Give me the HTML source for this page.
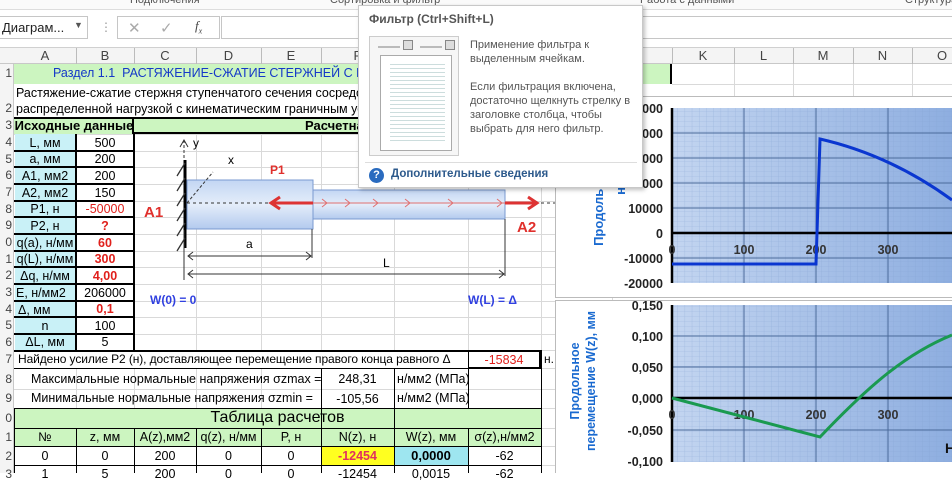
<!DOCTYPE html>
<html><head><meta charset="utf-8"><style>
*{margin:0;padding:0;box-sizing:border-box}
body{width:952px;height:473px;overflow:hidden;background:#fff;font-family:"Liberation Sans","DejaVu Sans",sans-serif;position:relative;font-size:12px;color:#000}
.a{position:absolute;white-space:nowrap}
.c{position:absolute;display:flex;align-items:center;justify-content:center;white-space:nowrap;font-size:12.5px}
.hd{position:absolute;top:48px;height:16px;font-size:13px;color:#444;text-align:center;line-height:16px}
.rn{position:absolute;left:0;width:12px;font-size:12px;color:#444;text-align:right}
.cy{background:#c9f1f7}
.gr{background:#ccf5c0}
.red{color:#e0201c}
</style></head><body>
<div class="a" style="left:0;top:0;width:952px;height:10px;background:#fafafa;border-bottom:1px solid #ddd"></div>
<div class="a" style="left:130px;top:-6px;font-size:11px;color:#555">Подключения</div>
<div class="a" style="left:330px;top:-6px;font-size:11px;color:#555">Сортировка и фильтр</div>
<div class="a" style="left:640px;top:-6px;font-size:11px;color:#555">Работа с данными</div>
<div class="a" style="left:905px;top:-6px;font-size:11px;color:#555">Структура</div>
<div class="a" style="left:0;top:10px;width:952px;height:38px;background:#fff;border-bottom:1px solid #d0d0d0"></div>
<div class="a" style="left:-1px;top:16px;width:89px;height:23px;border:1px solid #c6c6c6;font-size:13px;line-height:21px;padding-left:2px;color:#222">Диаграм...</div>
<div class="a" style="left:74px;top:20px;font-size:9px;color:#555">▼</div>
<div class="a" style="left:100px;top:20px;color:#999">⋮</div>
<div class="a" style="left:117px;top:16px;width:103px;height:23px;border:1px solid #c6c6c6"></div>
<div class="a" style="left:128px;top:19px;font-size:15px;color:#aaa">✕</div>
<div class="a" style="left:160px;top:19px;font-size:15px;color:#aaa">✓</div>
<div class="a" style="left:195px;top:18px;font-size:13px;color:#444;font-style:italic;font-family:'Liberation Serif',serif">f<sub style="font-size:8px">x</sub></div>
<div class="a" style="left:221px;top:16px;width:740px;height:23px;border:1px solid #c6c6c6"></div>
<div class="a" style="left:0;top:48px;width:952px;height:16px;background:#f4f4f4;border-bottom:1px solid #c8c8c8"></div>
<div class="a" style="left:0;top:64px;width:14px;height:409px;background:#f4f4f4;border-right:1px solid #c8c8c8"></div>
<div class="hd" style="left:14px;width:62px">A</div>
<div class="hd" style="left:76px;width:58px">B</div>
<div class="hd" style="left:134px;width:62px">C</div>
<div class="hd" style="left:196px;width:65px">D</div>
<div class="hd" style="left:261px;width:60px">E</div>
<div class="hd" style="left:321px;width:73px">F</div>
<div class="hd" style="left:672px;width:62px">K</div>
<div class="hd" style="left:734px;width:59px">L</div>
<div class="hd" style="left:793px;width:60px">M</div>
<div class="hd" style="left:853px;width:59px">N</div>
<div class="hd" style="left:912px;width:60px">O</div>
<svg class="a" style="left:0;top:0" width="952" height="473">
<g stroke="#d9d9d9" stroke-width="1">
<path d="M76.5 64V473M134.5 64V473M196.5 64V473M261.5 64V473M321.5 64V473M394.5 64V473M468.5 64V473M541.5 64V473M612.5 64V473M734.5 64V98M793.5 64V98M853.5 64V98M912.5 64V98"/>
<path d="M14 84.5H952M14 117.5H952M14 134.5H560M14 151.5H560M14 167.5H560M14 184.5H560M14 201.5H560M14 217.5H560M14 234.5H560M14 251.5H560M14 267.5H560M14 284.5H560M14 301.5H560M14 317.5H560M14 334.5H560M14 350.5H560M14 368.5H560M14 389.5H560M14 408.5H560M14 428.5H560M14 446.5H560M14 465.5H560"/>
</g>
<g stroke="#bbb"><path d="M76.5 48V64M134.5 48V64M196.5 48V64M261.5 48V64M321.5 48V64M734.5 48V64M793.5 48V64M853.5 48V64M912.5 48V64M672.5 48V64"/></g>
</svg>
<div class="rn" style="top:66px">1</div><div class="rn" style="top:101px">2</div><div class="rn" style="top:118px">3</div>
<div class="rn" style="top:135px">4</div><div class="rn" style="top:152px">5</div><div class="rn" style="top:168px">6</div>
<div class="rn" style="top:185px">7</div><div class="rn" style="top:202px">8</div><div class="rn" style="top:218px">9</div>
<div class="rn" style="top:235px">0</div><div class="rn" style="top:252px">1</div><div class="rn" style="top:268px">2</div>
<div class="rn" style="top:285px">3</div><div class="rn" style="top:302px">4</div><div class="rn" style="top:318px">5</div>
<div class="rn" style="top:335px">6</div><div class="rn" style="top:352px">7</div><div class="rn" style="top:372px">8</div>
<div class="rn" style="top:391px">9</div><div class="rn" style="top:411px">0</div><div class="rn" style="top:430px">1</div>
<div class="rn" style="top:449px">2</div><div class="rn" style="top:467px">3</div>
<div class="a gr" style="left:14px;top:64px;width:658px;height:20px;border-right:2px solid #000"></div>
<div class="a" style="left:53px;top:66px;font-size:12.5px;color:#1438c8">Раздел 1.1&nbsp; РАСТЯЖЕНИЕ-СЖАТИЕ СТЕРЖНЕЙ С ПРОМЕЖУТОЧНОЙ ОПОРОЙ</div>
<div class="a" style="left:670px;top:84px;width:2px;height:14px;background:#000"></div>
<div class="a" style="left:14px;top:84px;width:658px;height:33px;background:#fff"></div>
<div class="a" style="left:16px;top:85px;font-size:12.5px;line-height:16px">Растяжение-сжатие стержня ступенчатого сечения сосредоточенной силой и<br>распределенной нагрузкой с кинематическим граничным условием</div>
<div class="a gr" style="left:14px;top:117px;width:120px;height:17px;border-top:2px solid #000;border-right:2px solid #000"></div>
<div class="c" style="left:14px;top:117px;width:120px;height:17px;font-weight:bold;font-size:13px">Исходные данные</div>
<div class="a gr" style="left:134px;top:117px;width:430px;height:17px;border-top:2px solid #000;border-bottom:2px solid #000"></div>
<div class="a" style="left:305px;top:118px;font-weight:bold;font-size:13px">Расчетная схема</div>
<div class="a" style="left:14px;top:134px;width:121px;height:216px;border-right:2px solid #000"></div>
<div class="a cy" style="left:15px;top:134px;width:61px;height:216px"></div>
<div class="c" style="left:14px;top:134px;width:62px;height:17px">L, мм</div><div class="c" style="left:76px;top:134px;width:58px;height:17px">500</div>
<div class="c" style="left:14px;top:151px;width:62px;height:16px">a, мм</div><div class="c" style="left:76px;top:151px;width:58px;height:16px">200</div>
<div class="c" style="left:14px;top:167px;width:62px;height:17px">A1, мм2</div><div class="c" style="left:76px;top:167px;width:58px;height:17px">200</div>
<div class="c" style="left:14px;top:184px;width:62px;height:17px">A2, мм2</div><div class="c" style="left:76px;top:184px;width:58px;height:17px">150</div>
<div class="c" style="left:14px;top:201px;width:62px;height:16px">P1, н</div><div class="c red" style="left:76px;top:201px;width:58px;height:16px">-50000</div>
<div class="c" style="left:14px;top:217px;width:62px;height:17px">P2, н</div><div class="c red" style="left:76px;top:217px;width:58px;height:17px;font-weight:bold">?</div>
<div class="c" style="left:14px;top:234px;width:62px;height:17px">q(a), н/мм</div><div class="c red" style="left:76px;top:234px;width:58px;height:17px;font-weight:bold">60</div>
<div class="c" style="left:14px;top:251px;width:62px;height:16px">q(L), н/мм</div><div class="c red" style="left:76px;top:251px;width:58px;height:16px;font-weight:bold">300</div>
<div class="c" style="left:14px;top:267px;width:62px;height:17px">Δq, н/мм</div><div class="c red" style="left:76px;top:267px;width:58px;height:17px;font-weight:bold">4,00</div>
<div class="a" style="left:16px;top:286px;font-size:12.5px">E, н/мм2</div><div class="c" style="left:76px;top:284px;width:58px;height:17px">206000</div>
<div class="a" style="left:18px;top:303px;font-size:12.5px">Δ, мм</div><div class="c red" style="left:76px;top:301px;width:58px;height:16px;font-weight:bold">0,1</div>
<div class="c" style="left:14px;top:317px;width:62px;height:17px">n</div><div class="c" style="left:76px;top:317px;width:58px;height:17px">100</div>
<div class="c" style="left:14px;top:334px;width:62px;height:16px">ΔL, мм</div><div class="c" style="left:76px;top:334px;width:58px;height:16px">5</div>
<svg class="a" style="left:0;top:0" width="952" height="473"><g stroke="#000" stroke-width="2"><path d="M76 134V350M14 151H134M14 167H134M14 184H134M14 201H134M14 217H134M14 234H134M14 251H134M14 267H134M14 284H134M14 301H134M14 317H134M14 334H134"/></g></svg>
<svg class="a" style="left:0;top:0" width="600" height="350">
<defs><linearGradient id="bar" x1="0" y1="0" x2="0" y2="1"><stop offset="0" stop-color="#c3d6f3"/><stop offset="0.5" stop-color="#e4edfa"/><stop offset="1" stop-color="#b3caee"/></linearGradient></defs>
<rect x="187" y="180" width="126" height="49" fill="url(#bar)" stroke="#7a9ad0"/>
<rect x="313" y="190" width="192" height="29" fill="url(#bar)" stroke="#7a9ad0"/>
<path d="M185 160V248" stroke="#000" stroke-width="3"/>
<g stroke="#333" stroke-width="1.3"><path d="M185 163l-8 13M185 178l-8 13M185 193l-8 13M185 208l-8 13M185 223l-8 13M185 238l-8 13"/></g>
<path d="M184 158V140" stroke="#333" stroke-dasharray="3 2"/><path d="M180 147l4-7 4 7" fill="none" stroke="#333"/>
<path d="M187 203L213 172" stroke="#333" stroke-dasharray="3 2"/>
<path d="M187 203H560" stroke="#333" stroke-dasharray="3 3"/>
<path d="M272 203H313" stroke="#d33" stroke-width="3"/><path d="M280 197l-9 6 9 6" fill="none" stroke="#d33" stroke-width="3"/>
<g stroke="#e07070" fill="none"><path d="M313 203H505"/><path d="M322 199l5 4-5 4M345 199l5 4-5 4M373 199l5 4-5 4M405 199l5 4-5 4M448 199l5 4-5 4M497 199l5 4-5 4"/></g>
<path d="M505 203H535" stroke="#d33" stroke-width="3"/><path d="M528 197l9 6-9 6" fill="none" stroke="#d33" stroke-width="3"/>
<g stroke="#333" fill="none"><path d="M184 230V280M312 229V258M505 219V276"/><path d="M188 256H311M188 274H504"/><path d="M193 252l-5 4 5 4M306 252l5 4-5 4M193 270l-5 4 5 4M499 270l5 4-5 4"/></g>
<text x="193" y="147" font-size="12">y</text><text x="228" y="164" font-size="12">x</text>
<text x="270" y="174" font-size="12" fill="#e0302c" font-weight="bold">P1</text>
<text x="144" y="217" font-size="15" fill="#e0302c" font-weight="bold">A1</text>
<text x="517" y="232" font-size="15" fill="#e0302c" font-weight="bold">A2</text>
<text x="246" y="248" font-size="12">a</text><text x="383" y="267" font-size="12">L</text>
<text x="150" y="304" font-size="12" fill="#3040e0" font-weight="bold">W(0) = 0</text>
<text x="468" y="304" font-size="12" fill="#3040e0" font-weight="bold">W(L) = Δ</text>
</svg>
<div class="a" style="left:14px;top:350px;width:527px;height:2px;background:#000"></div>
<div class="a" style="left:15px;top:352px;width:453px;height:16px;background:#fff"></div>
<div class="a" style="left:18px;top:352px;font-size:12px;letter-spacing:-0.1px">Найдено усилие P2 (н), доставляющее перемещение правого конца равного Δ</div>
<div class="c red" style="left:468px;top:351px;width:73px;height:17px;border:1px solid #000;border-right:2px solid #000;background:#fff">-15834</div>
<div class="a" style="left:544px;top:352px">н.</div>
<div class="a" style="left:31px;top:372px;font-size:12.5px">Максимальные нормальные напряжения σzmax =</div>
<div class="c" style="left:321px;top:368px;width:73px;height:21px">248,31</div>
<div class="a" style="left:397px;top:372px;font-size:12.5px">н/мм2 (МПа)</div>
<div class="a" style="left:31px;top:391px;font-size:12.5px">Минимальные нормальные напряжения σzmin =</div>
<div class="c" style="left:321px;top:389px;width:73px;height:19px">-105,56</div>
<div class="a" style="left:397px;top:391px;font-size:12.5px">н/мм2 (МПа)</div>
<div class="a gr" style="left:14px;top:408px;width:527px;height:38px"></div>
<div class="c" style="left:14px;top:408px;width:527px;height:20px;font-size:16px">Таблица расчетов</div>
<div class="c" style="left:14px;top:428px;width:62px;height:18px">№</div>
<div class="c" style="left:76px;top:428px;width:58px;height:18px">z, мм</div>
<div class="c" style="left:134px;top:428px;width:62px;height:18px">A(z),мм2</div>
<div class="c" style="left:196px;top:428px;width:65px;height:18px">q(z), н/мм</div>
<div class="c" style="left:261px;top:428px;width:60px;height:18px">P, н</div>
<div class="c" style="left:321px;top:428px;width:73px;height:18px">N(z), н</div>
<div class="c" style="left:394px;top:428px;width:74px;height:18px">W(z), мм</div>
<div class="c" style="left:468px;top:428px;width:73px;height:18px">σ(z),н/мм2</div>
<div class="a" style="left:322px;top:447px;width:72px;height:18px;background:#ffff20"></div>
<div class="a" style="left:395px;top:447px;width:73px;height:18px;background:#9ee6f0"></div>
<div class="c" style="left:14px;top:446px;width:62px;height:19px">0</div>
<div class="c" style="left:76px;top:446px;width:58px;height:19px">0</div>
<div class="c" style="left:134px;top:446px;width:62px;height:19px">200</div>
<div class="c" style="left:196px;top:446px;width:65px;height:19px">0</div>
<div class="c" style="left:261px;top:446px;width:60px;height:19px">0</div>
<div class="c" style="left:321px;top:446px;width:73px;height:19px;color:#e03060;font-weight:bold">-12454</div>
<div class="c" style="left:394px;top:446px;width:74px;height:19px;font-weight:bold;font-size:13px">0,0000</div>
<div class="c" style="left:468px;top:446px;width:73px;height:19px">-62</div>
<div class="c" style="left:14px;top:465px;width:62px;height:17px">1</div>
<div class="c" style="left:76px;top:465px;width:58px;height:17px">5</div>
<div class="c" style="left:134px;top:465px;width:62px;height:17px">200</div>
<div class="c" style="left:196px;top:465px;width:65px;height:17px">0</div>
<div class="c" style="left:261px;top:465px;width:60px;height:17px">0</div>
<div class="c" style="left:321px;top:465px;width:73px;height:17px">-12454</div>
<div class="c" style="left:394px;top:465px;width:74px;height:17px">0,0015</div>
<div class="c" style="left:468px;top:465px;width:73px;height:17px">-62</div>
<svg class="a" style="left:0;top:0" width="560" height="473"><g stroke="#000" stroke-width="1"><path d="M14.5 408V473M541.5 350V473M14 408.5H541M14 428.5H541M14 446.5H541M14 465.5H541M76.5 428V473M134.5 428V473M196.5 428V473M261.5 428V473M321.5 368V473M394.5 368V473M468.5 350V408M468.5 428V473M14 368.5H541"/></g></svg>
<svg class="a" style="left:555px;top:96px" width="397" height="377">
<defs>
<linearGradient id="pb" x1="0" x2="1"><stop offset="0" stop-color="#c3d5f0"/><stop offset="1" stop-color="#8eaee0"/></linearGradient>
<pattern id="mg" width="7.2" height="5" patternUnits="userSpaceOnUse"><path d="M0 0V5M0 0H7.2" stroke="#7f9fcf" stroke-width="0.6" opacity="0.6"/></pattern>
</defs>
<rect x="0.5" y="0.5" width="400" height="201" fill="#fff" stroke="#bbb"/>
<rect x="0.5" y="204.5" width="400" height="180" fill="#fff" stroke="#bbb"/>
<rect x="117" y="12" width="280" height="175" fill="url(#pb)"/>
<rect x="117" y="12" width="280" height="175" fill="url(#mg)"/>
<rect x="117" y="209" width="280" height="157" fill="url(#pb)"/>
<rect x="117" y="209" width="280" height="157" fill="url(#mg)"/>
<g stroke="#4a6a9a" stroke-width="1"><path d="M189 12V187M261 12V187M333 12V187M117 37H397M117 62H397M117 87H397M117 112H397M117 162H397M189 209V366M261 209V366M333 209V366M117 240H397M117 271H397M117 334H397"/></g>
<g stroke="#000" stroke-width="2.5"><path d="M117 12V187M117 137H397M117 209V366M117 302H397"/></g>
<g font-size="12.5" fill="#222" text-anchor="end" font-weight="bold">
<text x="108" y="17">50000</text><text x="108" y="42">40000</text><text x="108" y="67">30000</text><text x="108" y="92">20000</text><text x="108" y="117">10000</text><text x="108" y="142">0</text><text x="108" y="167">-10000</text><text x="108" y="192">-20000</text>
<text x="108" y="214">0,150</text><text x="108" y="245">0,100</text><text x="108" y="276">0,050</text><text x="108" y="307">0,000</text><text x="108" y="339">-0,050</text><text x="108" y="370">-0,100</text>
</g>
<g font-size="12.5" fill="#333" text-anchor="middle" font-weight="bold">
<text x="117" y="158">0</text><text x="189" y="158">100</text><text x="261" y="158">200</text><text x="333" y="158">300</text>
<text x="117" y="323">0</text><text x="189" y="323">100</text><text x="261" y="323">200</text><text x="333" y="323">300</text>
</g>
<path d="M117 168H261V168L265 43Q335 59 397 104" fill="none" stroke="#0a36d0" stroke-width="3"/>
<path d="M117 302L265 341Q305 299 333 277Q365 252 397 239" fill="none" stroke="#1a9a50" stroke-width="3"/>
<text transform="translate(48 110) rotate(-90)" font-size="13" fill="#1a6ad0" font-weight="bold" text-anchor="middle">Продольная</text>
<text transform="translate(70 95) rotate(-90)" font-size="13" fill="#1a6ad0" font-weight="bold" text-anchor="middle">н</text>
<text transform="translate(24 285) rotate(-90)" font-size="12.5" fill="#1a6ad0" font-weight="bold" text-anchor="middle">Продольное</text>
<text transform="translate(40 285) rotate(-90)" font-size="12.5" fill="#1a6ad0" font-weight="bold" text-anchor="middle">перемещение W(z), мм</text>
<text x="390" y="357" font-size="14" font-weight="bold" fill="#111">Н</text>
</svg>
<div class="a" style="left:358px;top:5px;width:285px;height:183px;background:#fff;border:1px solid #c8c8c8;box-shadow:2px 2px 4px rgba(0,0,0,.25)">
 <div class="a" style="left:10px;top:6px;font-weight:bold;font-size:12px;color:#555">Фильтр (Ctrl+Shift+L)</div>
 <div class="a" style="left:10px;top:30px;width:90px;height:120px;border:1px solid #ccc;background:#f6f6f6">
  <div class="a" style="left:8px;top:9px;width:22px;height:2px;background:#bbb"></div>
  <div class="a" style="left:33px;top:3px;width:10px;height:10px;border:1px solid #888;background:#ddd"></div>
  <div class="a" style="left:50px;top:9px;width:22px;height:2px;background:#bbb"></div>
  <div class="a" style="left:75px;top:3px;width:10px;height:10px;border:1px solid #888;background:#ddd"></div>
  <div class="a" style="left:10px;top:18px;width:72px;height:96px;border:1px solid #aaa;background:#fff"></div>
  <div class="a" style="left:20px;top:24px;width:55px;height:80px;background:repeating-linear-gradient(#fff 0 3px,#cdd 3px 4px)"></div>
 </div>
 <div class="a" style="left:111px;top:32px;font-size:11px;line-height:14px;color:#555">Применение фильтра к<br>выделенным ячейкам.<br><br>Если фильтрация включена,<br>достаточно щелкнуть стрелку в<br>заголовке столбца, чтобы<br>выбрать для него фильтр.</div>
 <div class="a" style="left:6px;top:156px;width:272px;height:1px;background:#ddd"></div>
 <div class="a" style="left:10px;top:162px;width:15px;height:15px;border-radius:50%;background:#2a6bbf;color:#fff;font-size:11px;font-weight:bold;text-align:center;line-height:15px">?</div>
 <div class="a" style="left:32px;top:162px;font-size:11.5px;font-weight:bold;color:#2d5a8c">Дополнительные сведения</div>
</div>
</body></html>
